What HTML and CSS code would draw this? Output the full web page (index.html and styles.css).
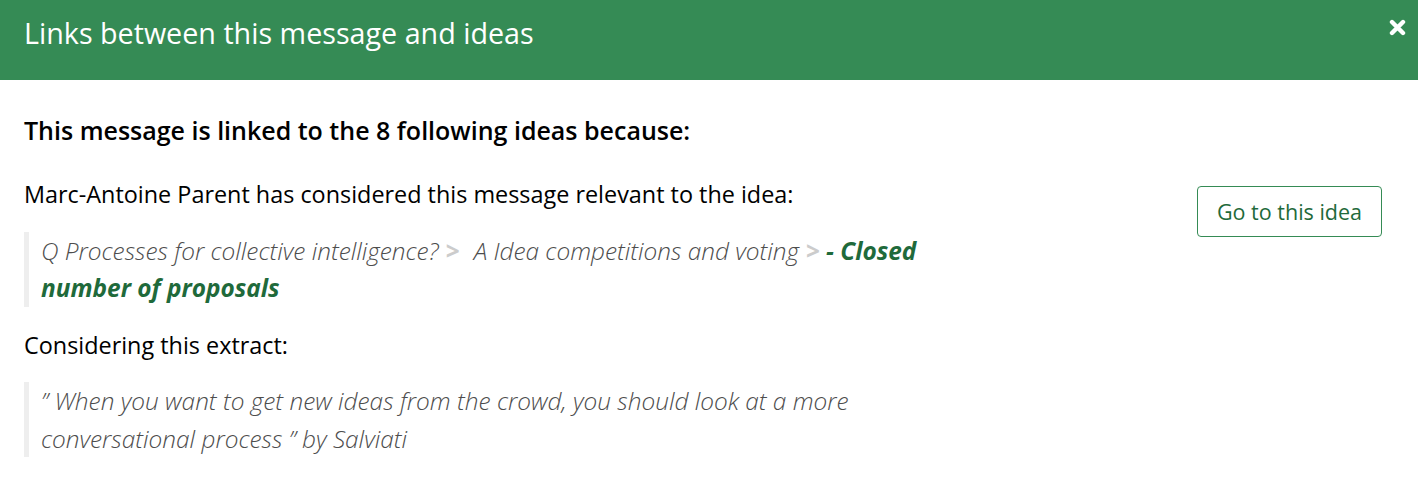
FILE: index.html
```html
<!DOCTYPE html>
<html lang="en">
<head>
    <meta charset="UTF-8">
    <title>Links between this message and ideas</title>
    <link rel="stylesheet" href="styles.css">
</head>
<body>
<div class="m-modal">
    <div class="m-modal-header">
        <h2 class="u-title">Links between this message and ideas</h2>
        <a class="u-close" href="#">
            <svg width="17" height="17" viewBox="0 0 17 17">
                <path d="M3 3 L14 14 M14 3 L3 14" stroke="#fff" stroke-width="4.4" stroke-linecap="round"/>
            </svg>
        </a>
    </div>
    <div class="m-modal-body">
        <h4 class="u-heading">This message is linked to the 8 following ideas because:</h4>
        <div class="m-link-row">
            <div class="m-link-info">
                <p class="u-text">Marc-Antoine Parent has considered this message relevant to the idea:</p>
                <blockquote class="u-quote">
                    Q Processes for collective intelligence?<span class="u-sep">&gt;</span>A Idea competitions and voting<span class="u-sep u-sep-last">&gt;</span><a class="u-idea" href="#">- Closed number of proposals</a>
                </blockquote>
                <p class="u-text">Considering this extract:</p>
                <blockquote class="u-quote">
                    &rdquo; When you want to get new ideas from the crowd, you should look at a more conversational process &rdquo; by Salviati
                </blockquote>
            </div>
            <button class="u-btn">Go to this idea</button>
        </div>
    </div>
</div>
</body>
</html>
```

FILE: styles.css
```css
* {
    padding: 0;
    margin: 0;
    box-sizing: border-box;
}
body {
    font-family: "Open Sans", "Noto Sans", sans-serif;
    color: #000;
    background: #fff;
}
.m-modal-header {
    height: 80px;
    background-color: #358b55;
    display: flex;
    align-items: center;
    justify-content: space-between;
    padding: 0 12px 0 24px;
}
.u-title {
    font-size: 28.7px;
    font-weight: 400;
    color: #fff;
    margin-top: -16px;
}
.u-close {
    display: block;
    height: 17px;
    margin-top: -25px;
}
.u-close svg {
    display: block;
}
.m-modal-body {
    padding: 35px 36px 0 24px;
}
.u-heading {
    font-size: 25px;
    font-weight: 600;
    line-height: 30px;
    margin-bottom: 31px;
}
.m-link-row {
    display: flex;
    align-items: flex-start;
    justify-content: space-between;
}
.m-link-info {
    width: 936px;
}
.u-text {
    font-size: 23.4px;
    line-height: 37.5px;
    margin-bottom: 18px;
}
.u-quote {
    border-left: 5px solid #eee;
    padding-left: 12px;
    font-size: 24.4px;
    line-height: 37.5px;
    font-style: italic;
    font-weight: 300;
    color: #4d4d4d;
    margin-bottom: 20px;
}
.u-sep {
    font-style: normal;
    font-weight: 700;
    color: #ccc;
    margin: 0 14px 0 7px;
}
.u-sep-last {
    margin: 0 6px 0 7px;
}
.u-idea {
    color: #1f6a3b;
    font-weight: 700;
    text-decoration: none;
}
.u-btn {
    margin-top: 10px;
    width: 185px;
    height: 51px;
    border: 1.5px solid #358b55;
    border-radius: 4px;
    background: #fff;
    color: #1f6a3b;
    font-family: "Open Sans", "Noto Sans", sans-serif;
    font-size: 21.5px;
    cursor: pointer;
}
```
